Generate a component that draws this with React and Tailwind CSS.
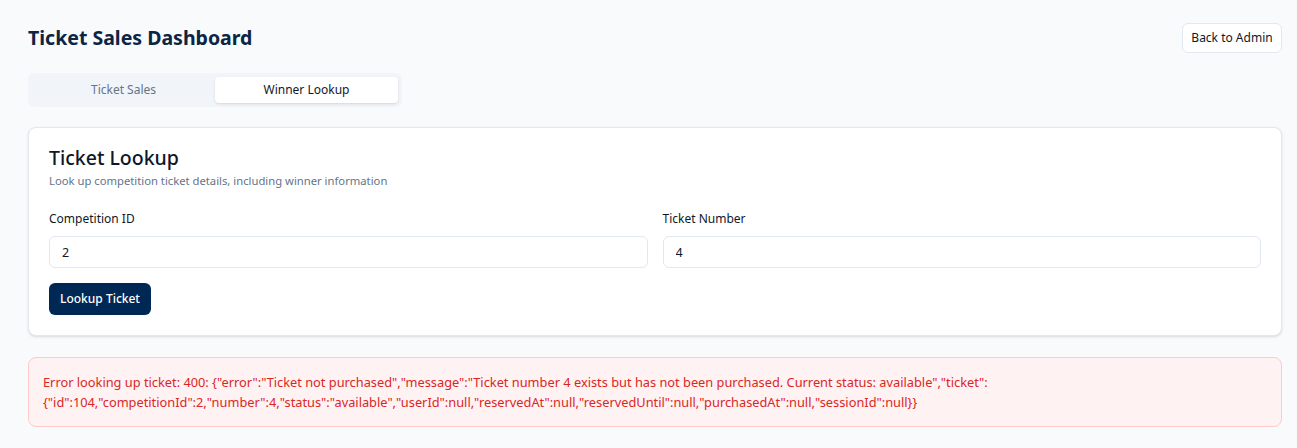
import { useState } from 'react'

const ERROR_TEXT =
  'Error looking up ticket: 400: {"error":"Ticket not purchased","message":"Ticket number 4 exists but has not been purchased. Current status: available","ticket":{"id":104,"competitionId":2,"number":4,"status":"available","userId":null,"reservedAt":null,"reservedUntil":null,"purchasedAt":null,"sessionId":null}}'

export default function App() {
  const [tab, setTab] = useState('winner')
  const [competitionId, setCompetitionId] = useState('2')
  const [ticketNumber, setTicketNumber] = useState('4')

  return (
    <div
      className="min-h-screen bg-[#f8fafc] pl-7 pr-[15px] pt-[23px] pb-6 text-[#0f172a]"
      style={{ fontFamily: '"Noto Sans", "Open Sans", sans-serif' }}
    >
      <div className="flex items-center justify-between">
        <h1 className="text-[19.5px] font-bold text-[#0b2545]">Ticket Sales Dashboard</h1>
        <button className="h-[30px] w-[100px] rounded-md border border-[#e2e8f0] bg-white text-[12px] text-[#0f172a]">
          Back to Admin
        </button>
      </div>

      <div className="mt-5 inline-flex h-[34px] w-[374px] items-center rounded-md bg-[#f1f5f9] p-1">
        <button
          onClick={() => setTab('sales')}
          className={`h-[26px] flex-1 rounded-[4px] text-[12px] ${tab === 'sales' ? 'bg-white text-[#0f172a] shadow-sm' : 'text-[#64748b]'}`}
        >
          Ticket Sales
        </button>
        <button
          onClick={() => setTab('winner')}
          className={`h-[26px] flex-1 rounded-[4px] text-[12px] ${tab === 'winner' ? 'bg-white text-[#0f172a] shadow-sm' : 'text-[#64748b]'}`}
        >
          Winner Lookup
        </button>
      </div>

      <div className="mt-5 rounded-lg border border-[#e2e8f0] bg-white p-5 shadow-sm">
        <h2 className="text-[19.5px] font-medium leading-5">Ticket Lookup</h2>
        <p className="mt-[5px] text-[11.25px] leading-4 text-[#64748b]">
          Look up competition ticket details, including winner information
        </p>

        <div className="mt-5 grid grid-cols-2 gap-x-[15px]">
          <div>
            <label className="block text-[12px] leading-5">Competition ID</label>
            <input
              value={competitionId}
              onChange={(e) => setCompetitionId(e.target.value)}
              className="mt-[7px] h-8 w-full rounded-md border border-[#e2e8f0] px-3 text-[12.5px] focus:outline-none"
            />
          </div>
          <div>
            <label className="block text-[12px] leading-5">Ticket Number</label>
            <input
              value={ticketNumber}
              onChange={(e) => setTicketNumber(e.target.value)}
              className="mt-[7px] h-8 w-full rounded-md border border-[#e2e8f0] px-3 text-[12.5px] focus:outline-none"
            />
          </div>
        </div>

        <button className="mt-[15px] h-8 w-[102px] rounded-md bg-[#002855] text-[12px] font-medium text-white">
          Lookup Ticket
        </button>
      </div>

      <div className="mt-[21px] rounded-lg border border-[#fecaca] bg-[#fef2f2] p-[14px] text-[12.8px] leading-5 text-[#dc2626] break-words">
        {ERROR_TEXT}
      </div>
    </div>
  )
}
